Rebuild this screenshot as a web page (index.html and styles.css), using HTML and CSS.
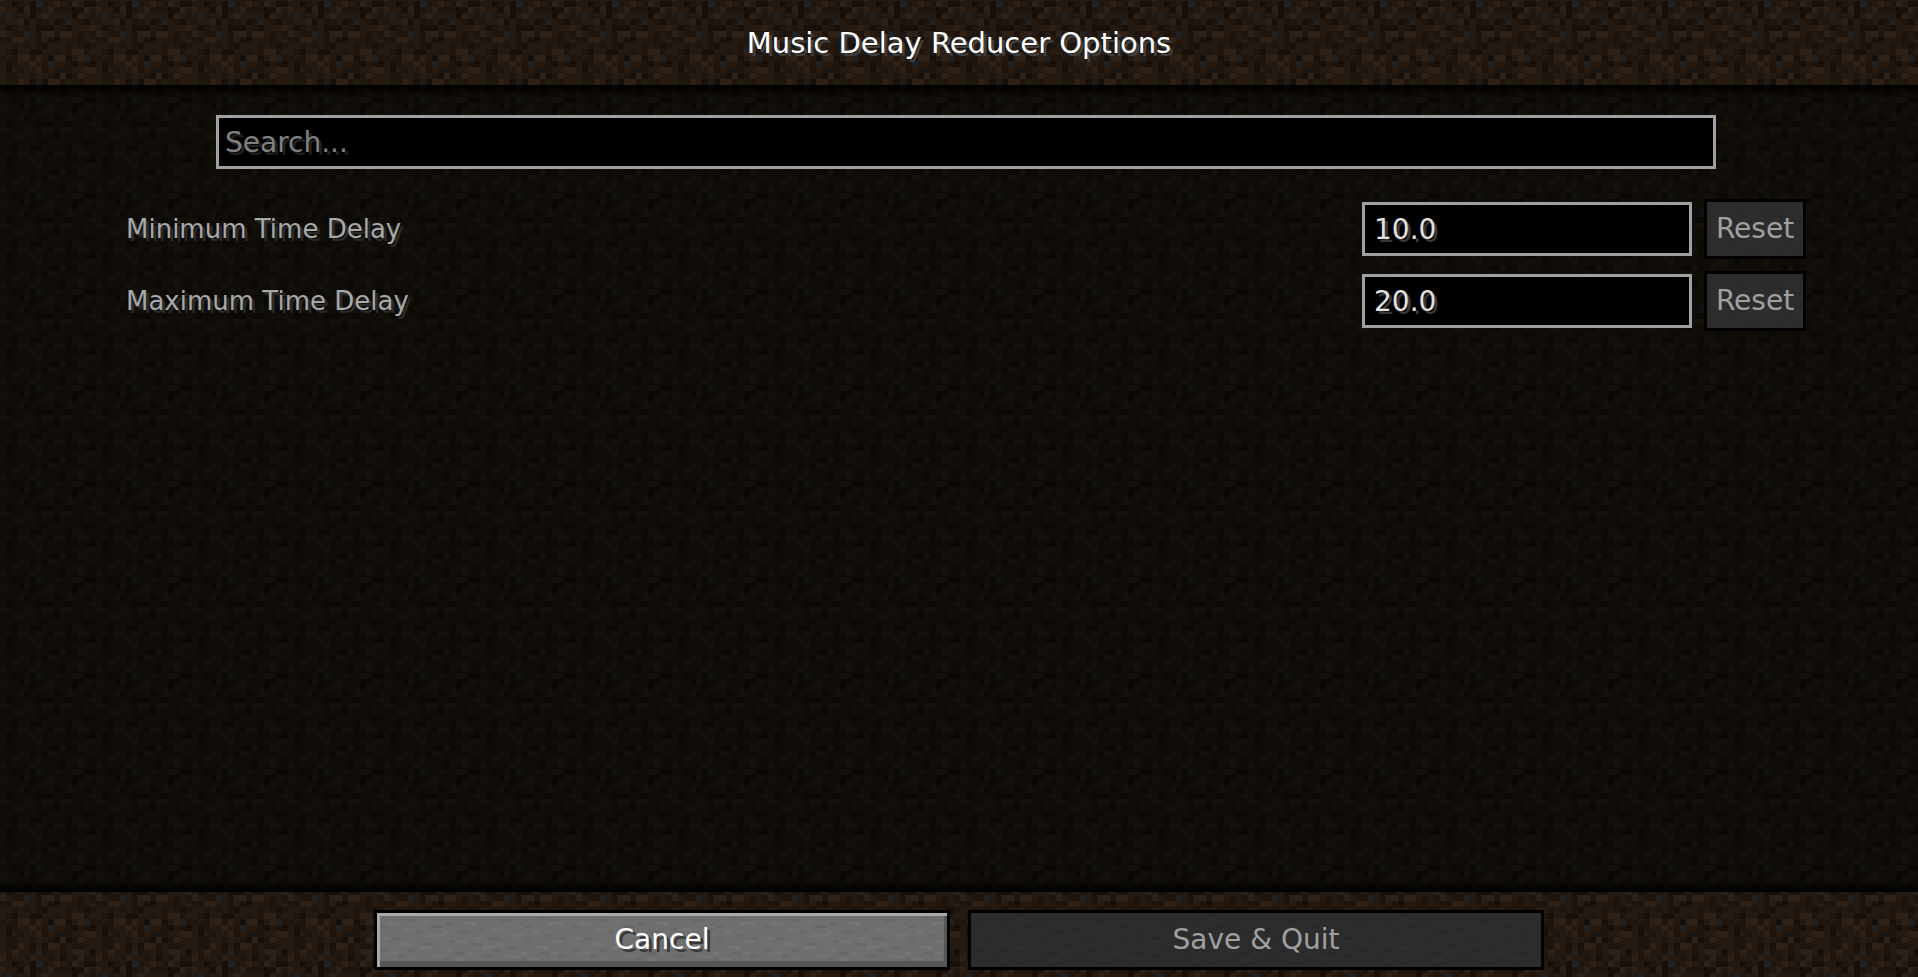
FILE: index.html
```html
<!DOCTYPE html>
<html lang="en">
<head>
    <meta charset="utf-8">
    <title>Music Delay Reducer Options</title>
    <link rel="stylesheet" href="styles.css">
</head>
<body>
    <header class="header">
        <h1>Music Delay Reducer Options</h1>
    </header>

    <main class="options">
        <input class="field search" type="text" placeholder="Search..." aria-label="Search">

        <div class="option">
            <label for="min-delay">Minimum Time Delay</label>
            <input class="field" id="min-delay" type="text" value="10.0">
            <button class="btn reset" disabled>Reset</button>
        </div>
        <div class="option">
            <label for="max-delay">Maximum Time Delay</label>
            <input class="field" id="max-delay" type="text" value="20.0">
            <button class="btn reset" disabled>Reset</button>
        </div>
    </main>

    <footer class="footer">
        <button class="btn">Cancel</button>
        <button class="btn" disabled>Save &amp; Quit</button>
    </footer>
</body>
</html>
```

FILE: styles.css
```css
* {
    box-sizing: border-box;
}
/* 16x16 dirt tile, 6px per texel */
body {
    margin: 0;
    min-height: 100vh;
    display: flex;
    flex-direction: column;
    font-family: "DejaVu Sans", sans-serif;
    font-size: 28px;
    line-height: 36px;
    color: #fff;
    background-color: #1e150e;
    background-image: url("data:image/svg+xml,%3Csvg xmlns='http://www.w3.org/2000/svg' width='96' height='96' viewBox='0 -.5 16 16' shape-rendering='crispEdges'%3E%3Cpath fill='%231e150f' d='M0-.5h16v16H0z'/%3E%3Cpath stroke='%23251a12' d='M0 0h2M4 0h1M8 0h1M10 0h1M13 0h1M1 1h2M7 1h1M15 1h1M0 2h1M3 2h2M6 2h1M8 2h3M11 2h1M14 2h1M1 3h2M5 3h1M8 3h1M12 3h1M15 3h1M0 4h1M3 4h1M5 4h1M9 4h1M12 4h3M1 5h1M5 5h1M12 5h1M14 5h1M4 6h2M7 6h1M10 6h2M14 6h2M0 7h2M3 7h1M5 7h1M8 7h3M12 7h1M0 8h1M3 8h2M7 8h2M10 8h1M15 8h1M1 9h1M7 9h1M12 9h1M0 10h1M3 10h2M6 10h1M9 10h2M13 10h1M0 11h1M2 11h1M4 11h2M8 11h1M12 11h2M0 12h1M3 12h2M6 12h2M14 12h2M0 13h1M4 13h1M6 13h1M11 13h1M14 13h2M0 14h1M3 14h2M8 14h2M11 14h1M14 14h1M2 15h2M6 15h2M9 15h1M11 15h1'/%3E%3Cpath stroke='%232e2118' d='M9 0h1M12 0h1M0 1h1M4 1h1M8 1h1M14 1h1M7 2h1M13 2h1M3 3h1M15 4h1M0 5h1M7 5h2M10 5h2M2 6h2M12 8h2M3 9h2M6 9h1M9 9h2M13 9h1M5 10h1M6 11h1M14 11h2M10 12h1M13 12h1M3 13h1M8 13h2M2 14h1M12 14h2M0 15h1M5 15h1M13 15h1'/%3E%3Cpath stroke='%23160f0a' d='M2 0h1M5 0h1M14 0h2M3 1h1M5 1h1M12 1h2M5 2h1M12 2h1M4 3h1M9 3h1M14 3h1M1 4h1M6 4h3M11 4h1M9 6h1M7 7h1M14 7h1M2 8h1M5 8h2M8 9h1M11 9h1M1 10h1M12 10h1M15 10h1M1 11h1M9 12h1M11 12h1M5 13h1M7 13h1M15 14h1M10 15h1'/%3E%3Cpath stroke='%23202325' d='M6 0h1M1 2h1M11 3h1M4 5h1M14 9h1M8 10h1M6 14h1'/%3E%3C/svg%3E");
    background-position: 0 1px;
}
.header {
    height: 85px;
    display: flex;
    align-items: center;
    justify-content: center;
}
h1 {
    margin: 0;
    font-size: 29px;
    font-weight: normal;
    text-shadow: 3px 3px 0 #3f3f3f;
}
.options {
    flex: 1;
    display: flex;
    flex-direction: column;
    gap: 12px;
    padding: 30px 112px 30px 126px;
    background:
        linear-gradient(#000, transparent) top / 100% 12px no-repeat,
        linear-gradient(transparent, #000) bottom / 100% 12px no-repeat,
        rgba(5, 5, 2, 0.6);
}
.field {
    width: 330px;
    height: 54px;
    padding: 0 9px;
    border: 3px solid #a0a0a0;
    border-radius: 0;
    outline: none;
    background: #000;
    color: #e0e0e0;
    font: inherit;
    text-shadow: 3px 3px 0 #383838;
}
.search {
    width: auto;
    margin: 0 90px 18px;
    padding: 0 6px;
}
.search::placeholder {
    color: #808080;
    opacity: 1;
    text-shadow: 3px 3px 0 #202020;
}
.option {
    display: flex;
    align-items: center;
    gap: 12px;
}
.option label {
    flex: 1;
    font-size: 26px;
    color: #a8a8a8;
    text-shadow: 3px 3px 0 #2a2a2a;
}
/* stone button with speckles, 3px per texel */
.btn {
    flex: 1;
    height: 60px;
    padding: 0;
    border: 3px solid #000;
    border-radius: 0;
    background-color: #6f6f6f;
    background-image: url("data:image/svg+xml,%3Csvg xmlns='http://www.w3.org/2000/svg' width='192' height='54' viewBox='0 -.5 64 18' shape-rendering='crispEdges'%3E%3Cpath stroke='%23fff' stroke-opacity='.04' d='M4 3h3M15 2h2M29 3h4M47 4h2M57 3h5M9 5h4M22 6h2M38 5h5M52 6h2M2 8h2M17 7h6M33 8h2M45 7h4M59 9h3M7 10h5M27 9h3M40 10h2M53 11h4M14 11h4M23 12h2M35 11h5M48 13h2M3 13h4M19 14h3M30 13h2M43 14h5M58 13h2M10 15h2M25 15h4M51 15h3'/%3E%3Cpath stroke='%23000' stroke-opacity='.06' d='M10 2h3M23 3h2M41 2h4M54 1h2M1 4h2M18 4h4M34 5h2M49 4h3M13 6h2M27 6h4M56 7h2M5 8h3M24 9h2M37 8h4M50 9h1M61 8h2M16 10h2M31 10h4M44 11h2M1 12h3M10 12h2M26 13h3M39 12h2M54 13h4M7 14h2M22 15h4M35 14h3M48 15h2M60 14h3M14 16h3M29 16h2M42 16h4'/%3E%3C/svg%3E");
    box-shadow: inset 3px 3px #aaa, inset -3px -6px #565656;
    color: #fff;
    font: inherit;
    text-shadow: 3px 3px 0 #383838;
}
.btn:disabled {
    background-color: #2c2c2c;
    background-blend-mode: overlay;
    box-shadow: none;
    color: #a0a0a0;
    text-shadow: none;
}
.reset {
    flex: 0 0 102px;
}
.footer {
    width: 100%;
    max-width: 1170px;
    height: 85px;
    margin: 0 auto;
    padding: 18px 0 7px;
    display: flex;
    gap: 18px;
}
```
